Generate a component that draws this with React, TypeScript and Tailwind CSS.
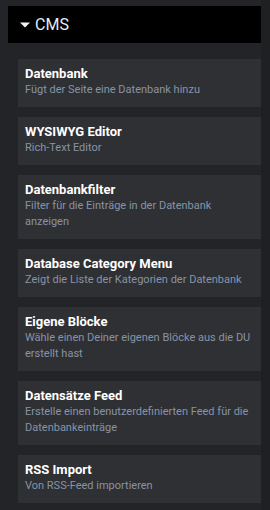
const blocks = [
  { title: 'Datenbank', desc: 'Fügt der Seite eine Datenbank hinzu' },
  { title: 'WYSIWYG Editor', desc: 'Rich-Text Editor' },
  { title: 'Datenbankfilter', desc: 'Filter für die Einträge in der Datenbank anzeigen' },
  { title: 'Database Category Menu', desc: 'Zeigt die Liste der Kategorien der Datenbank' },
  { title: 'Eigene Blöcke', desc: 'Wähle einen Deiner eigenen Blöcke aus die DU erstellt hast' },
  { title: 'Datensätze Feed', desc: 'Erstelle einen benutzerdefinierten Feed für die Datenbankeinträge' },
  { title: 'RSS Import', desc: 'Von RSS-Feed importieren' },
];

export default function App() {
  return (
    <div className="flex h-[510px] w-[270px] overflow-hidden bg-[#232427] font-['Roboto',sans-serif]">
      <div className="flex-1 pl-2 pt-[6px]">
        {/* Category header */}
        <div className="flex h-[37px] items-center bg-black pl-3">
          <svg width="10" height="6" viewBox="0 0 10 6" className="mr-[5px] mt-[1px]">
            <path d="M0 0.5 L10 0.5 L5 5.5 Z" fill="#f2f5fa" />
          </svg>
          <span className="text-[16px] leading-none text-[#e3ecf8]">CMS</span>
        </div>

        {/* Blocks */}
        <div className="mt-4 flex flex-col gap-[10px] pl-[10px]">
          {blocks.map((b) => (
            <div key={b.title} className="bg-[#2f3033] pb-[9px] pl-[7px] pr-2 pt-[6px]">
              <div className="text-[13px] font-bold leading-[17px] text-white">{b.title}</div>
              <div className="text-[11px] leading-[16px] text-[#8893a6]">{b.desc}</div>
            </div>
          ))}
        </div>
      </div>
      <div className="w-[9px] bg-[#1f2022]" />
    </div>
  );
}
